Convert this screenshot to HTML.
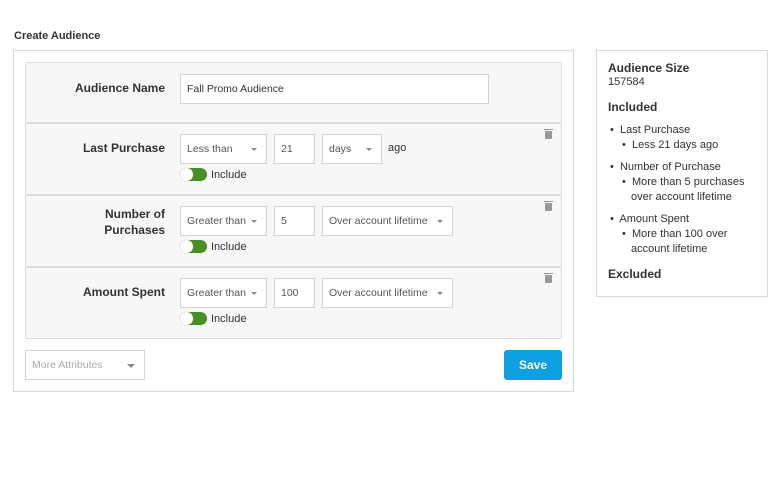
<!DOCTYPE html>
<html><head><style>
*{box-sizing:border-box;margin:0;padding:0}
body{width:780px;height:480px;background:#fff;font-family:"Liberation Sans",sans-serif;color:#333;position:relative;overflow:hidden}
.a{position:absolute}
.box{position:absolute;border:1px solid #d8d8d8;background:#fff}
.sec{position:absolute;left:25px;width:537px;background:#f7f7f7;border:1px solid #dcdcdc;border-radius:2px}
.lbl{position:absolute;font-weight:bold;font-size:12px;color:#333;text-align:right;right:396px;width:120px;line-height:16px}
.in{position:absolute;background:#fff;border:1px solid #d4d4d4;font-size:10.5px;color:#555;padding-left:6px;display:flex;align-items:center;white-space:nowrap}
.caret{position:absolute;right:9px;top:13px;width:0;height:0;border-left:3px solid transparent;border-right:3px solid transparent;border-top:3px solid #888}
.tog{position:absolute;width:27px;height:13px;border-radius:7px;background:#4a8f24}
.tog:before{content:"";position:absolute;left:0;top:0;width:13px;height:13px;border-radius:50%;background:#fff;box-shadow:0 0 1px #999}
.inc{position:absolute;font-size:11px;color:#333}
.trash{position:absolute;width:7px;height:8px;background:#999;border-radius:0 0 1px 1px}
.trash:before{content:"";position:absolute;left:-1px;top:-2px;width:9px;height:1px;background:#999}
.rp{font-size:11px;color:#333}
</style></head><body>
<div class="a" style="left:14px;top:30px;font-weight:bold;font-size:11px">Create Audience</div>
<div class="box" style="left:13px;top:50px;width:561px;height:342px"></div>

<div class="sec" style="top:62px;height:61px"></div>
<div class="lbl" style="top:80px;left:45px">Audience Name</div>
<div class="in" style="left:180px;top:74px;width:309px;height:30px;color:#333">Fall Promo Audience</div>

<div class="sec" style="top:123px;height:72px"></div>
<div class="lbl" style="top:140px;left:45px">Last Purchase</div>
<div class="in" style="left:180px;top:134px;width:87px;height:30px">Less than<span class="caret"></span></div>
<div class="in" style="left:274px;top:134px;width:41px;height:30px">21</div>
<div class="in" style="left:322px;top:134px;width:60px;height:30px">days<span class="caret"></span></div>
<div class="a" style="left:388px;top:142px;font-size:11px">ago</div>
<div class="tog" style="left:180px;top:168px"></div><div class="inc" style="left:211px;top:169px">Include</div>
<div class="trash" style="left:545px;top:131px"></div>

<div class="sec" style="top:195px;height:72px"></div>
<div class="lbl" style="top:206px;left:45px">Number of<br>Purchases</div>
<div class="in" style="left:180px;top:206px;width:87px;height:30px">Greater than<span class="caret"></span></div>
<div class="in" style="left:274px;top:206px;width:41px;height:30px">5</div>
<div class="in" style="left:322px;top:206px;width:131px;height:30px">Over account lifetime<span class="caret"></span></div>
<div class="tog" style="left:180px;top:240px"></div><div class="inc" style="left:211px;top:241px">Include</div>
<div class="trash" style="left:545px;top:203px"></div>

<div class="sec" style="top:267px;height:72px"></div>
<div class="lbl" style="top:284px;left:45px">Amount Spent</div>
<div class="in" style="left:180px;top:278px;width:87px;height:30px">Greater than<span class="caret"></span></div>
<div class="in" style="left:274px;top:278px;width:41px;height:30px">100</div>
<div class="in" style="left:322px;top:278px;width:131px;height:30px">Over account lifetime<span class="caret"></span></div>
<div class="tog" style="left:180px;top:312px"></div><div class="inc" style="left:211px;top:313px">Include</div>
<div class="trash" style="left:545px;top:275px"></div>

<div class="in" style="left:25px;top:350px;width:120px;height:30px;color:#aaa">More Attributes<span class="caret" style="top:13px;border-left-width:4px;border-right-width:4px;border-top-width:4px"></span></div>
<div class="a" style="left:504px;top:350px;width:58px;height:30px;background:#0ea0e0;border-radius:3px;color:#fff;font-weight:bold;font-size:12px;display:flex;align-items:center;justify-content:center">Save</div>

<div class="box" style="left:596px;top:50px;width:172px;height:247px"></div>
<div class="a" style="left:608px;top:61px;font-weight:bold;font-size:12px">Audience Size</div>
<div class="a rp" style="left:608px;top:76px">157584</div>
<div class="a" style="left:608px;top:100px;font-weight:bold;font-size:12px">Included</div>
<div class="a rp" style="left:610px;top:123px;line-height:15px">
<div>•&nbsp; Last Purchase</div>
<div style="padding-left:12px">•&nbsp; Less 21 days ago</div>
<div style="margin-top:7px">•&nbsp; Number of Purchase</div>
<div style="padding-left:12px">•&nbsp; More than 5 purchases</div>
<div style="padding-left:21px">over account lifetime</div>
<div style="margin-top:7px">•&nbsp; Amount Spent</div>
<div style="padding-left:12px">•&nbsp; More than 100 over</div>
<div style="padding-left:21px">account lifetime</div>
</div>
<div class="a" style="left:608px;top:267px;font-weight:bold;font-size:12px">Excluded</div>
</body></html>
